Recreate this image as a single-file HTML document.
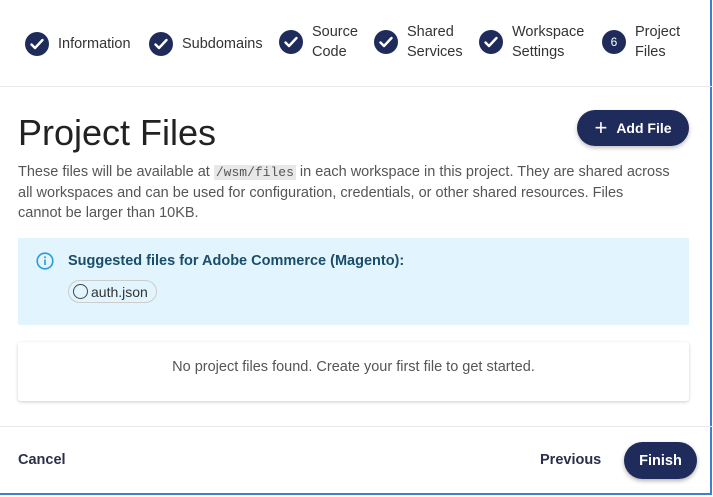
<!DOCTYPE html>
<html><head><style>
*{box-sizing:border-box;margin:0;padding:0}
body{width:713px;height:497px;background:#fff;font-family:"Liberation Sans",sans-serif;color:#333;position:relative;overflow:hidden}
.frame{position:absolute;left:0;top:0;width:712px;height:495px;border-right:2px solid #3d7fd0;border-bottom:2px solid #3d7fd0}
.step{position:absolute;top:30px;display:flex;align-items:center;font-size:14.5px;color:#333;line-height:20px}
.c{width:24px;height:24px;border-radius:50%;background:#1f2b5b;display:flex;align-items:center;justify-content:center;color:#fff;font-size:12px;margin-right:9px;flex:none}
.hdr{position:absolute;left:0;right:0;top:86px;border-top:1px solid #e8e8e8}
h1{position:absolute;left:18px;top:112px;font-size:36px;font-weight:normal;color:#222}
.add{position:absolute;left:577px;top:110px;width:112px;height:36px;border-radius:18px;background:#1f2b5b;color:#fff;font-size:14px;font-weight:bold;display:flex;align-items:center;justify-content:center;box-shadow:0 2px 4px rgba(0,0,0,.25)}
p{position:absolute;left:18px;top:162px;width:652px;font-size:14.5px;line-height:20px;color:#555}
code{font-family:"Liberation Mono",monospace;background:#e8e8e8;font-size:13px;padding:0 2px}
.info{position:absolute;left:18px;top:238px;width:671px;height:87px;background:#e2f4fd}
.info b{position:absolute;left:50px;top:15px;font-size:14.5px;color:#1a4d6a}
.chip{position:absolute;left:50px;top:42px;width:89px;height:23px;border:1px solid #ccc;border-radius:12px;font-size:14px;color:#333;display:flex;align-items:center;padding-left:4px}
.chip i{width:15px;height:15px;border:1.5px solid #444;border-radius:50%;margin-right:3px}
.empty{position:absolute;left:18px;top:342px;width:671px;height:59px;border-radius:3px;box-shadow:0 1px 3px rgba(0,0,0,.2);font-size:14.5px;color:#555;text-align:center;line-height:51px}
.ftr{position:absolute;left:0;right:0;top:426px;border-top:1px solid #e8e8e8}
.fb{position:absolute;top:452px;font-size:14.5px;font-weight:bold;color:#2a2f4a}
.fin{position:absolute;left:624px;top:442px;width:73px;height:37px;border-radius:19px;background:#1f2b5b;color:#fff;font-weight:bold;font-size:14.5px;display:flex;align-items:center;justify-content:center;box-shadow:0 2px 4px rgba(0,0,0,.3)}
</style></head><body>
<div class="frame"></div>
<svg width="0" height="0" style="position:absolute"><defs><symbol id="ck" viewBox="0 0 24 24"><path d="M6.5 12.5l3.5 3.5 7.5-8" fill="none" stroke="#fff" stroke-width="2.4" stroke-linecap="round" stroke-linejoin="round"/></symbol></defs></svg>
<div class="step" style="left:25px;top:32px"><span class="c"><svg width="24" height="24"><use href="#ck"/></svg></span>Information</div>
<div class="step" style="left:149px;top:32px"><span class="c"><svg width="24" height="24"><use href="#ck"/></svg></span>Subdomains</div>
<div class="step" style="left:279px;top:22px"><span class="c"><svg width="24" height="24"><use href="#ck"/></svg></span>Source<br>Code</div>
<div class="step" style="left:374px;top:22px"><span class="c"><svg width="24" height="24"><use href="#ck"/></svg></span>Shared<br>Services</div>
<div class="step" style="left:479px;top:22px"><span class="c"><svg width="24" height="24"><use href="#ck"/></svg></span>Workspace<br>Settings</div>
<div class="step" style="left:602px;top:22px"><span class="c">6</span>Project<br>Files</div>
<div class="hdr"></div>
<h1>Project Files</h1>
<div class="add"><span style="font-size:22px;font-weight:normal;margin-right:9px;line-height:1">+</span>Add File</div>
<p>These files will be available at <code>/wsm/files</code> in each workspace in this project. They are shared across all workspaces and can be used for configuration, credentials, or other shared resources. Files cannot be larger than 10KB.</p>
<div class="info">
<svg style="position:absolute;left:18px;top:14px" width="18" height="18" viewBox="0 0 18 18"><circle cx="9" cy="9" r="7.8" fill="none" stroke="#2a9bd8" stroke-width="1.6"/><rect x="8.2" y="7.5" width="1.6" height="5.5" fill="#2a9bd8"/><circle cx="9" cy="5.3" r="1" fill="#2a9bd8"/></svg>
<b>Suggested files for Adobe Commerce (Magento):</b>
<div class="chip"><i></i>auth.json</div>
</div>
<div class="empty">No project files found. Create your first file to get started.</div>
<div class="ftr"></div>
<div class="fb" style="left:18px">Cancel</div>
<div class="fb" style="left:540px">Previous</div>
<div class="fin">Finish</div>
</body></html>
